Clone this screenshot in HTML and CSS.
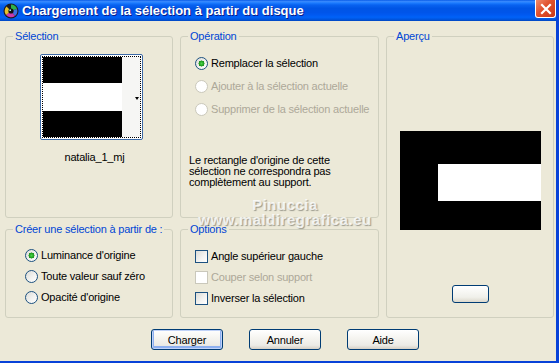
FILE: index.html
```html
<!DOCTYPE html>
<html lang="fr">
<head>
    <meta charset="UTF-8">
    <title>Chargement de la sélection à partir du disque</title>
    <link rel="stylesheet" href="styles.css">
</head>
<body>
    <div class="window">
        <div class="titlebar">
            <svg class="app-icon" width="16" height="16" viewBox="0 0 16 16">
                <circle cx="8" cy="8" r="7.5" fill="#1b1b22"/>
                <path d="M8 8 L8 1.5 A6.5 6.5 0 0 1 14 6 Z" fill="#2fb34a"/>
                <path d="M8 8 L14 6 A6.5 6.5 0 0 1 12 13 Z" fill="#3b6fe0"/>
                <path d="M8 8 L12 13 A6.5 6.5 0 0 1 3 12 Z" fill="#c93ab0"/>
                <path d="M8 8 L3 12 A6.5 6.5 0 0 1 3.5 3.5 Z" fill="#e6c22a"/>
                <circle cx="8" cy="8" r="2.6" fill="#111"/>
                <circle cx="7.2" cy="7.2" r="0.9" fill="#9fd"/>
            </svg>
            <span class="title">Chargement de la sélection à partir du disque</span>
            <button class="close" aria-label="Fermer">
                <svg width="12" height="12" viewBox="0 0 12 12">
                    <path d="M2 2 L10 10 M10 2 L2 10" stroke="#fff" stroke-width="2.2" stroke-linecap="square"/>
                </svg>
            </button>
        </div>

        <div class="client">
            <div class="groups">
                <fieldset class="group sel">
                    <legend>Sélection</legend>
                    <div class="thumb">
                        <div class="focus">
                            <div class="bars">
                                <div class="bar-black top"></div>
                                <div class="bar-white"></div>
                                <div class="bar-black bottom"></div>
                            </div>
                            <div class="drop"><span class="arrow"></span></div>
                        </div>
                    </div>
                    <div class="sel-name">natalia_1_mj</div>
                </fieldset>

                <fieldset class="group op">
                    <legend>Opération</legend>
                    <div class="choices">
                        <label class="choice"><input type="radio" name="op" checked> Remplacer la sélection</label>
                        <label class="choice disabled"><input type="radio" name="op" disabled> Ajouter à la sélection actuelle</label>
                        <label class="choice disabled"><input type="radio" name="op" disabled> Supprimer de la sélection actuelle</label>
                    </div>
                    <p class="note">Le rectangle d'origine de cette<br>sélection ne correspondra pas<br>complètement au support.</p>
                </fieldset>

                <fieldset class="group preview">
                    <legend>Aperçu</legend>
                    <div class="preview-img">
                        <div class="preview-white"></div>
                    </div>
                    <button class="mini"></button>
                </fieldset>

                <fieldset class="group create">
                    <legend>Créer une sélection à partir de :</legend>
                    <div class="choices">
                        <label class="choice"><input type="radio" name="src" checked> Luminance d'origine</label>
                        <label class="choice"><input type="radio" name="src"> Toute valeur sauf zéro</label>
                        <label class="choice"><input type="radio" name="src"> Opacité d'origine</label>
                    </div>
                </fieldset>

                <fieldset class="group opts">
                    <legend>Options</legend>
                    <div class="choices">
                        <label class="choice"><input type="checkbox"> Angle supérieur gauche</label>
                        <label class="choice disabled"><input type="checkbox" disabled> Couper selon support</label>
                        <label class="choice"><input type="checkbox"> Inverser la sélection</label>
                    </div>
                </fieldset>
            </div>

            <div class="actions">
                <button class="btn default">Charger</button>
                <button class="btn">Annuler</button>
                <button class="btn">Aide</button>
            </div>

            <div class="watermark">
                <div class="wm-name">Pinuccia</div>
                <div class="wm-url">www.maldiregrafica.eu</div>
            </div>
        </div>
    </div>
</body>
</html>
```

FILE: styles.css
```css
* {
    box-sizing: border-box;
}
body {
    margin: 0;
    font-family: 'Liberation Sans', Arial, sans-serif;
    font-size: 11px;
    letter-spacing: -0.2px;
    color: #000;
    background: #ece9d8;
}
.window {
    width: 559px;
    height: 363px;
    background: #ece9d8;
    border-right: 3px solid #0842d8;
    border-bottom: 2px solid #0842d8;
    overflow: hidden;
}
.titlebar {
    height: 21px;
    display: flex;
    align-items: center;
    padding-left: 3px;
    background: linear-gradient(#0a5ce8 0%, #3a8cff 8%, #1c7cff 14%, #0862f0 24%, #0055e5 40%, #0055ea 60%, #005af2 72%, #0062f8 82%, #0056e0 92%, #0046c0 100%);
    position: relative;
}
.app-icon {
    flex: none;
    margin-top: 1px;
}
.title {
    margin-left: 3px;
    color: #fff;
    font-weight: bold;
    font-size: 13px;
    letter-spacing: 0;
    text-shadow: 1px 1px 0 #0a1c8a;
}
.close {
    position: absolute;
    right: 0;
    top: 0;
    width: 21px;
    height: 18px;
    padding: 0;
    border: 1px solid #fff;
    border-top: none;
    border-radius: 0 0 3px 3px;
    background: linear-gradient(135deg, #f08a6c, #e0502c 45%, #c8381a);
    display: flex;
    align-items: center;
    justify-content: center;
}
.client {
    position: relative;
    padding: 9px 0 0 5px;
}
.groups {
    display: grid;
    grid-template-columns: 168px 199px 168px;
    grid-template-rows: 188px 95px;
    column-gap: 7px;
    row-gap: 5px;
}
.group {
    margin: 0;
    padding: 0;
    border: 1px solid #d0d0bf;
    border-radius: 3px;
    min-width: 0;
}
.group legend {
    margin-left: 7px;
    padding: 0 2px;
    color: #0046d5;
    line-height: 13px;
}
.sel { grid-column: 1; grid-row: 1; }
.op { grid-column: 2; grid-row: 1; }
.preview { grid-column: 3; grid-row: 1 / span 2; }
.create { grid-column: 1; grid-row: 2; }
.opts { grid-column: 2; grid-row: 2; }

/* selection thumbnail */
.thumb {
    margin: 11px 0 0 34px;
    width: 103px;
    height: 86px;
    padding: 1px;
    background: #fff;
    border: 1px solid #3d6aa6;
    border-radius: 2px;
}
.focus {
    height: 100%;
    border: 1px dotted #000;
    display: flex;
}
.bars {
    width: 79px;
    display: flex;
    flex-direction: column;
}
.bar-black {
    background: #000;
}
.bar-black.top { height: 26px; }
.bar-white { height: 28px; background: #fff; }
.bar-black.bottom { flex: 1; }
.drop {
    flex: 1;
    background: #f6f6f4;
    display: flex;
    align-items: center;
    justify-content: flex-end;
    padding-right: 1px;
}
.arrow {
    width: 0;
    height: 0;
    border-left: 2.5px solid transparent;
    border-right: 2.5px solid transparent;
    border-top: 3px solid #000;
    margin-top: 2px;
}
.sel-name {
    margin: 11px 0 0 34px;
    width: 103px;
    padding-left: 6px;
    text-align: center;
    line-height: 13px;
}

/* radios and checkboxes */
.choices {
    display: flex;
    flex-direction: column;
}
.op .choices {
    margin: 14px 0 0 14px;
    gap: 10px;
}
.create .choices {
    margin: 13px 0 0 19px;
    gap: 8px;
}
.opts .choices {
    margin: 14px 0 0 14px;
    gap: 8px;
}
.choice {
    display: flex;
    align-items: center;
    height: 13px;
    line-height: 13px;
    white-space: nowrap;
}
.choice.disabled {
    color: #aca899;
}
.choice input {
    appearance: none;
    -webkit-appearance: none;
    flex: none;
    width: 13px;
    height: 13px;
    margin: 0 3px 0 0;
    border: 1px solid #1c5180;
    background: linear-gradient(135deg, #dcdcd7 0%, #f4f4f2 60%, #fff 100%);
}
.choice input[type=radio] {
    border-radius: 50%;
}
.choice input[type=radio]:checked {
    background: radial-gradient(circle at 50% 50%, #4cd44c 0, #21a121 2.2px, #1a8a1a 2.8px, transparent 3.2px), linear-gradient(135deg, #dcdcd7 0%, #f4f4f2 60%, #fff 100%);
}
.choice input:disabled {
    border-color: #cac8bb;
    background: #fff;
}
.note {
    margin: 39px 0 0 8px;
    line-height: 11px;
}

/* preview */
.preview-img {
    margin: 88px 0 0 13px;
    width: 141px;
    height: 99px;
    background: #000;
    padding: 33px 0 0 38px;
}
.preview-white {
    height: 37px;
    background: #fff;
}
.mini {
    display: block;
    margin: 55px auto 0;
    width: 37px;
    height: 18px;
    border: 1px solid #003c74;
    border-radius: 3px;
    background: linear-gradient(#fff, #f0f0ea 70%, #dcd8cc);
}

/* bottom buttons */
.actions {
    display: flex;
    gap: 26px;
    margin: 11px 0 0 146px;
}
.btn {
    width: 72px;
    height: 21px;
    padding: 0;
    font-family: inherit;
    font-size: 11px;
    letter-spacing: -0.2px;
    color: #000;
    border: 1px solid #003c74;
    border-radius: 3px;
    background: linear-gradient(#fff 0%, #f6f5f1 40%, #ecebe6 80%, #d6d0c5 100%);
}
.btn.default {
    box-shadow: inset 0 0 0 1px #c0d2f8, inset 0 -1px 0 2px #8eb0f0;
}

.watermark {
    position: absolute;
    left: 190px;
    top: 176px;
    width: 190px;
    text-align: center;
    font-weight: bold;
    letter-spacing: 0.5px;
    color: rgba(255, 255, 255, 0.8);
    text-shadow: 1px 1px 1px rgba(90, 90, 80, 0.55);
    pointer-events: none;
}
.wm-name {
    font-size: 15px;
    line-height: 15px;
}
.wm-url {
    font-size: 15px;
    line-height: 16px;
}
```
